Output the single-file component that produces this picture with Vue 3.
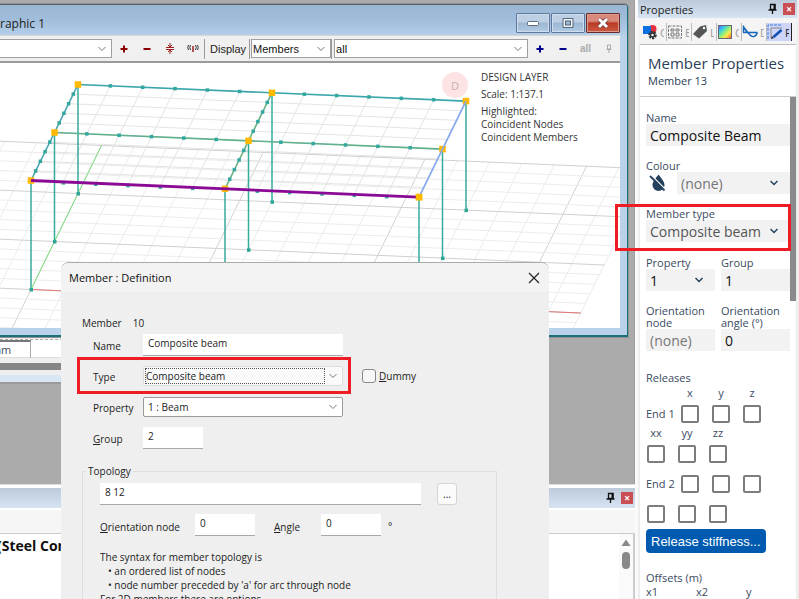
<script setup>
import { ref } from 'vue'

const W = [194, 8.3]
const D = [23.5, -48]
const corner = [31, 180.5]
const height = 109

const at = (u, v) => [
  corner[0] + u * W[0] + v * D[0],
  corner[1] + u * W[1] + v * D[1],
]
const seg = (a, b, dy = 0) => ({ x1: a[0], y1: a[1] + dy, x2: b[0], y2: b[1] + dy })

/* roof panel mesh: 6 divisions across, 5 divisions deep, per bay */
const mesh = []
for (let i = 0; i <= 12; i++) mesh.push(seg(at(i / 6, 0), at(i / 6, 2)))
for (let j = 0; j <= 10; j++) mesh.push(seg(at(0, j / 5), at(2, j / 5)))

/* ground grid, heavier every fifth line */
const ground = []
for (let i = -10; i <= 17; i++) {
  ground.push({ ...seg(at(i / 6, -1), at(i / 6, 3), height), major: i % 5 === 0 })
}
for (let j = -5; j <= 15; j++) {
  ground.push({ ...seg(at(-10 / 6, j / 5), at(17 / 6, j / 5), height), major: j % 5 === 0 })
}

const columns = []
const nodes = []
for (let u = 0; u <= 2; u++) {
  for (let v = 0; v <= 2; v++) {
    const p = at(u, v)
    nodes.push(p)
    columns.push({ x: p[0], y1: p[1], y2: p[1] + height })
  }
}

const dots = []
for (let v = 0; v <= 2; v++) {
  for (let i = 1; i < 12; i++) if (i !== 6) dots.push([...at(i / 6, v), v === 0 ? 1 : 0])
}
for (let u = 0; u <= 1; u++) {
  for (let j = 1; j < 10; j++) if (j !== 5) dots.push([...at(u, j / 5), 0])
}

const redAxis = seg(at(0, 0), at(17 / 6, 0), height)
const greenAxis = seg(at(0, 0), at(0, 3), height)
const backBeam = seg(at(0, 2), at(2, 2))
const midBeam = seg(at(0, 1), at(2, 1))
const leftBeam = seg(at(0, 0), at(0, 2))
const centreBeam = seg(at(1, 0), at(1, 2))
const rightBeam = seg(at(2, 0), at(2, 2))
const frontBeam = seg(at(0, 0), at(2, 0))

const form = ref({ name: 'Composite beam', group: '2', topology: '8 12', node: '0', angle: '0' })
const props = ref({ name: 'Composite Beam', group: '1', node: '(none)', angle: '0' })
</script>

<template>
  <div class="app">
    <div class="work">
      <div class="desktop">
        <section class="table-window">
          <div class="sheet"><span class="cell">am</span></div>
          <div class="hbar"></div>
          <div class="edge"></div>
        </section>

        <section class="graphic">
          <header class="graphic-title">
            <span>raphic 1</span>
            <div class="win-buttons">
              <button class="wb" aria-label="Minimise">
                <svg width="14" height="14" viewBox="0 0 14 14"><rect x="1.500" y="5.500" width="11" height="4" rx="1" fill="#fff" stroke="#5d6c7d" /></svg>
              </button>
              <button class="wb" aria-label="Maximise">
                <svg width="14" height="14" viewBox="0 0 14 14"><path d="M2 2.500h10v9H2z" fill="#eef3f8" stroke="#55667a" /><rect x="4.500" y="5" width="5" height="4" fill="#9db6d0" stroke="#55667a" /></svg>
              </button>
              <button class="wb red" aria-label="Close">
                <svg width="14" height="14" viewBox="0 0 14 14"><path d="M3 3l8 8M11 3l-8 8" stroke="#6d3030" stroke-width="4.500" /><path d="M3 3l8 8M11 3l-8 8" stroke="#fff" stroke-width="3" /></svg>
              </button>
            </div>
          </header>

          <div class="toolbar">
            <div class="pick first">
              <select aria-label="List"><option></option></select>
              <svg class="chev" width="8" height="6" viewBox="0 0 8 6"><path d="M.5 1L4 4.500 7.500 1" /></svg>
            </div>
            <button class="tool" aria-label="Add"><svg width="14" height="14" viewBox="0 0 14 14"><path d="M7 3.500v7M3.500 7h7" stroke="#8b0000" stroke-width="2" /></svg></button>
            <button class="tool" aria-label="Remove"><svg width="14" height="14" viewBox="0 0 14 14"><path d="M3.500 7h7" stroke="#8b0000" stroke-width="2" /></svg></button>
            <button class="tool" aria-label="Shrink"><svg width="14" height="14" viewBox="0 0 14 14" fill="none" stroke="#a02020"><path d="M3 5.500h8M3 7.500h8M7 1v4M7 8v4M5 3l2 2 2-2M5 10l2-2 2 2" /></svg></button>
            <button class="tool" aria-label="Broadcast"><svg width="14" height="14" viewBox="0 0 14 14" fill="none" stroke="#333"><path d="M2.500 3q-1.500 2.500 0 5M4.500 3q-1.500 2.500 0 5M11.500 3q1.500 2.500 0 5M9.500 3q1.500 2.500 0 5" /><path d="M7 4v6" stroke="#a02020" stroke-width="1.500" /></svg></button>
            <i class="sep"></i>
            <label class="display" for="kind">Display</label>
            <i class="sep"></i>
            <div class="pick kind">
              <select id="kind"><option>Members</option></select>
              <svg class="chev" width="8" height="6" viewBox="0 0 8 6"><path d="M.5 1L4 4.500 7.500 1" /></svg>
            </div>
            <i class="sep"></i>
            <div class="pick grow">
              <select aria-label="Which"><option>all</option></select>
              <svg class="chev" width="8" height="6" viewBox="0 0 8 6"><path d="M.5 1L4 4.500 7.500 1" /></svg>
            </div>
            <button class="tool" aria-label="Add to list"><svg width="14" height="14" viewBox="0 0 14 14"><path d="M7 3.500v7M3.500 7h7" stroke="#00008b" stroke-width="2" /></svg></button>
            <button class="tool" aria-label="Remove from list"><svg width="14" height="14" viewBox="0 0 14 14"><path d="M3.500 7h7" stroke="#00008b" stroke-width="2" /></svg></button>
            <button class="tool all">all</button>
            <button class="tool" aria-label="Pin"><svg width="14" height="14" viewBox="0 0 14 14" fill="none" stroke="#aaa"><path d="M5.500 3h3v4h-3zM4.500 7.500h5M7 8v3" /></svg></button>
          </div>

          <div class="viewport">
            <svg class="scene" viewBox="0 63 620 265" preserveAspectRatio="xMinYMin meet">
              <g stroke-width="1">
                <line v-for="(l, i) in ground" :key="'g' + i" :x1="l.x1" :y1="l.y1" :x2="l.x2" :y2="l.y2" :stroke="l.major ? '#d0d0d0' : '#ececec'" />
                <line v-for="(l, i) in mesh" :key="'m' + i" v-bind="l" stroke="#e4e4e4" />
              </g>
              <line v-bind="redAxis" stroke="#e07878" />
              <line v-bind="greenAxis" stroke="#7be07b" />
              <line v-for="(c, i) in columns" :key="'c' + i" :x1="c.x" :x2="c.x" :y1="c.y1" :y2="c.y2" stroke="#35ab9c" stroke-width="1.500" />
              <rect v-for="(c, i) in columns" :key="'b' + i" :x="c.x - 1.5" :y="c.y2 - 1.5" width="3.500" height="3.500" fill="#2fa596" />
              <g stroke-width="1.600">
                <line v-bind="backBeam" stroke="#3ba7ad" />
                <line v-bind="midBeam" stroke="#5fb08c" />
                <line v-bind="leftBeam" stroke="#45a5b0" />
                <line v-bind="centreBeam" stroke="#6bb182" />
              </g>
              <rect v-for="(d, i) in dots" :key="'d' + i" :x="d[0] - 1.75" :y="d[1] - 1.75 + d[2]" width="3.500" height="3.500" fill="#33a8a0" />
              <rect v-for="(n, i) in nodes" :key="'n' + i" :x="n[0] - 3.25" :y="n[1] - 3.25" width="6.500" height="6.500" fill="#ffb900" />
              <line v-bind="rightBeam" stroke="#86a8ec" stroke-width="1.700" />
              <line v-bind="frontBeam" stroke="#8a0a96" stroke-width="2.800" />
              <rect :x="nodes[6][0] - 3.25" :y="nodes[6][1] - 3.25" width="6.500" height="6.500" fill="#ffb900" />
            </svg>
            <div class="legend">
              <span class="badge">D</span>
              <div class="legend-text">
                <p>DESIGN LAYER</p>
                <p>Scale: 1:137.1</p>
                <ul><li>Highlighted:</li><li>Coincident Nodes</li><li>Coincident Members</li></ul>
              </div>
            </div>
          </div>
        </section>
      </div>

      <section class="output">
        <header class="bar">
          <svg width="11" height="12" viewBox="0 0 11 12"><path d="M3.500 1.500h4.500v5H3.500zM1.500 7h8M5.500 7v4" fill="none" stroke="#111" stroke-width="1.300" /><path d="M6.500 1h2v6h-2z" fill="#111" /></svg>
          <button class="x" aria-label="Close output">×</button>
        </header>
        <div class="output-tools"></div>
        <div class="output-body">
          <strong>(Steel Com</strong>
          <div class="vscroll">
            <svg width="10" height="8" viewBox="0 0 10 8"><path d="M5 .5L9.500 7h-9z" fill="#888" /></svg>
            <i></i>
          </div>
        </div>
      </section>

      <form class="dialog" role="dialog" aria-label="Member : Definition" @submit.prevent>
        <header>
          <h2>Member : Definition</h2>
          <button type="button" class="close" aria-label="Close"><svg width="12" height="12" viewBox="0 0 12 12"><path d="M1 1l10 10M11 1L1 11" stroke="#222" stroke-width="1.200" /></svg></button>
        </header>
        <div class="dialog-body">
          <p class="member"><span>Member</span><span>10</span></p>
          <div class="row">
            <label for="d-name">Name</label>
            <input id="d-name" v-model="form.name" class="box wide" />
          </div>
          <div class="row">
            <label for="d-type">Type</label>
            <div class="combo flat wide">
              <select id="d-type"><option>Composite beam</option></select>
              <svg class="chev" width="8" height="6" viewBox="0 0 8 6"><path d="M.5 1L4 4.500 7.500 1" /></svg>
            </div>
            <label class="dummy"><input type="checkbox" /><span><u>D</u>ummy</span></label>
            <div class="mark"></div>
          </div>
          <div class="row">
            <label for="d-prop">Property</label>
            <div class="combo wide">
              <select id="d-prop"><option>1 : Beam</option></select>
              <svg class="chev" width="8" height="6" viewBox="0 0 8 6"><path d="M.5 1L4 4.500 7.500 1" /></svg>
            </div>
          </div>
          <div class="row">
            <label for="d-group"><u>G</u>roup</label>
            <input id="d-group" v-model="form.group" class="box short" />
          </div>
          <fieldset>
            <legend>Topology</legend>
            <div class="line">
              <input v-model="form.topology" class="box topo" aria-label="Topology" />
              <button type="button" class="more">...</button>
            </div>
            <div class="line second">
              <label class="l-node" for="d-node"><u>O</u>rientation node</label>
              <input id="d-node" v-model="form.node" class="box short" />
              <label class="l-angle" for="d-angle"><u>A</u>ngle</label>
              <input id="d-angle" v-model="form.angle" class="box short" />
              <span class="deg">°</span>
            </div>
            <div class="hint">
              <p>The syntax for member topology is</p>
              <ul><li>• an ordered list of nodes</li><li>• node number preceded by 'a' for arc through node</li></ul>
              <p>For 2D members there are options</p>
            </div>
          </fieldset>
        </div>
      </form>
    </div>

    <aside class="panel">
      <header class="bar">
        <h2>Properties</h2>
        <svg width="11" height="12" viewBox="0 0 11 12"><path d="M3.500 1.500h4.500v5H3.500zM1.500 7h8M5.500 7v4" fill="none" stroke="#111" stroke-width="1.300" /><path d="M6.500 1h2v6h-2z" fill="#111" /></svg>
        <button class="x" aria-label="Close properties">×</button>
      </header>
      <nav class="tabs">
        <button><svg width="16" height="16" viewBox="0 0 16 16"><circle cx="10.500" cy="5" r="4" fill="#e8313a" /><rect x="1" y="2" width="8" height="8" fill="#0a6fe0" /><circle cx="10.500" cy="11" r="3" fill="none" stroke="#333" stroke-width="2.500" stroke-dasharray="2 1" /><circle cx="10.500" cy="11" r="2" fill="none" stroke="#333" stroke-width="1.500" /></svg><span>C</span></button>
        <button><svg width="16" height="16" viewBox="0 0 16 16" fill="none" stroke="#777"><rect x="1.500" y="2" width="13" height="12" stroke-dasharray="3 1" /><path d="M4 5h3v2H4zM9 5h3v2H9zM4 9h3v3H4zM9 9h3v3H9z" /></svg><span>E</span></button>
        <button><svg width="16" height="16" viewBox="0 0 16 16"><path d="M1 10L8 2.500l6-1.500 1 6-8 7.500z" fill="#555" /><circle cx="12" cy="4" r="1.200" fill="#fff" /></svg><span>L</span></button>
        <button><svg width="16" height="16" viewBox="0 0 16 16"><defs><linearGradient id="rainbow" x1="0" y1="0" x2="1" y2="1"><stop offset="0" stop-color="#6a4df0" /><stop offset=".25" stop-color="#30c8f0" /><stop offset=".5" stop-color="#8ff07a" /><stop offset=".7" stop-color="#ffe94a" /><stop offset="1" stop-color="#ff4a2a" /></linearGradient></defs><rect x="1.500" y="1.500" width="13" height="13" fill="url(#rainbow)" stroke="#667" /></svg><span>C</span></button>
        <button><svg width="16" height="16" viewBox="0 0 16 16" fill="none" stroke="#1768b8" stroke-width="1.500"><path d="M1.500 1.500v7M1 8.500h14.500M1.500 3l6 7.500q3.500 4 6.500.5l1.500-2.500" /><path d="M4 8v-2M14.500 8.500v3" stroke-width="1" /></svg><span>D</span></button>
        <button class="on"><svg width="16" height="16" viewBox="0 0 16 16" fill="none"><path d="M1 15V1h14" stroke="#3b7be0" stroke-dasharray="3 1" /><path d="M4 14V4h11" stroke="#888" /><path d="M6.500 13l8-7" stroke="#1250b8" stroke-width="2.600" /><path d="M4 15l1-3 2 2z" fill="#222" /></svg><span>P</span></button>
      </nav>
      <div class="card">
        <div class="heading">
          <h1>Member Properties</h1>
          <p>Member 13</p>
        </div>
        <div class="thumb"></div>
        <div class="fields">
          <div class="field">
            <label for="p-name">Name</label>
            <input id="p-name" v-model="props.name" />
          </div>
          <div class="field">
            <label for="p-colour">Colour</label>
            <div class="colour">
              <svg width="18" height="18" viewBox="0 0 18 18"><path d="M9.500 .5C6.500 4.500 3.500 7.500 3.500 11a6 6 0 0 0 12 0C15.500 7.500 12.500 4.500 9.500 .5z" fill="#24405c" /><path d="M2.500 1.500l15 15" stroke="#f8f8f8" stroke-width="1.500" /><path d="M1 2l14.500 14.500" stroke="#24405c" stroke-width="1.800" /></svg>
              <div class="sel">
                <select id="p-colour" class="muted"><option>(none)</option></select>
                <svg class="chev" width="8" height="6" viewBox="0 0 8 6"><path d="M.5 1L4 4.500 7.500 1" /></svg>
              </div>
            </div>
          </div>
          <div class="field">
            <label for="p-type">Member type</label>
            <div class="sel">
              <select id="p-type" class="soft"><option>Composite beam</option></select>
              <svg class="chev" width="8" height="6" viewBox="0 0 8 6"><path d="M.5 1L4 4.500 7.500 1" /></svg>
            </div>
            <div class="mark"></div>
          </div>
          <div class="pair">
            <div class="field">
              <label for="p-prop">Property</label>
              <div class="sel">
                <select id="p-prop"><option>1</option></select>
                <svg class="chev" width="8" height="6" viewBox="0 0 8 6"><path d="M.5 1L4 4.500 7.500 1" /></svg>
              </div>
            </div>
            <div class="field">
              <label for="p-group">Group</label>
              <input id="p-group" v-model="props.group" />
            </div>
          </div>
          <div class="pair">
            <div class="field">
              <label for="p-node">Orientation node</label>
              <input id="p-node" v-model="props.node" class="muted" />
            </div>
            <div class="field">
              <label for="p-angle">Orientation angle (°)</label>
              <input id="p-angle" v-model="props.angle" />
            </div>
          </div>
        </div>
        <div class="releases">
          <h3>Releases</h3>
          <div class="rel heads"><span></span><b>x</b><b>y</b><b>z</b></div>
          <div class="rel"><span>End 1</span><input v-for="a in ['x', 'y', 'z']" :key="a" type="checkbox" :aria-label="'End 1 ' + a" /></div>
          <div class="rel rot heads"><b>xx</b><b>yy</b><b>zz</b></div>
          <div class="rel rot"><input v-for="a in ['xx', 'yy', 'zz']" :key="a" type="checkbox" :aria-label="'End 1 ' + a" /></div>
          <div class="rel end2"><span>End 2</span><input v-for="a in ['x', 'y', 'z']" :key="a" type="checkbox" :aria-label="'End 2 ' + a" /></div>
          <div class="rel rot end2"><input v-for="a in ['xx', 'yy', 'zz']" :key="a" type="checkbox" :aria-label="'End 2 ' + a" /></div>
          <button class="primary">Release stiffness...</button>
          <h3 class="offsets">Offsets (m)</h3>
          <div class="offs"><label>x1<input /></label><label>x2<input /></label><label>y<input /></label></div>
        </div>
      </div>
    </aside>
  </div>
</template>

<style>
body { overflow: hidden; }
</style>

<style scoped>
* { box-sizing: border-box; }
h1, h2, h3, p, ul { margin: 0; padding: 0; font-weight: 400; list-style: none; }
button, input, select { font: inherit; color: inherit; border: 0; padding: 0; margin: 0; border-radius: 0; background: none; outline: 0; min-width: 0; }
select { appearance: none; width: 100%; height: 100%; }
svg { display: block; flex: none; }
u { text-decoration-thickness: 1px; text-underline-offset: 1px; }
.chev path { fill: none; stroke: #777; }

.app { display: grid; grid-template: 100% / 1fr 164px; height: 100vh; overflow: hidden; font-family: "Open Sans", "Noto Sans", sans-serif; font-size: 11px; color: #222; background: #fff; }
.work { position: relative; display: flex; flex-direction: column; min-width: 0; }
.desktop { position: relative; flex: 1; background: #ababab; border-right: 1px solid #9c9c9c; overflow: hidden; }

.graphic { position: absolute; left: 0; top: 4px; right: 6px; border: solid #1a7276; border-width: 1px 1px 2px 0; border-top-color: #555f6a; border-top-right-radius: 4px; background: #bad1ea; overflow: hidden; box-shadow: 0 0 0 1px #8d9296; }
.graphic-title { display: flex; align-items: center; justify-content: space-between; height: 30px; padding: 6px 7px 0 0; font-size: 12px; background: linear-gradient(#9ab6d3, #a0bddb 50%, #b3cfea); }
.win-buttons { display: flex; gap: 1px; }
.wb { display: grid; place-items: center; width: 34px; height: 20px; border: 1px solid #60789a; border-radius: 1px; background: linear-gradient(#bccfe3 45%, #9db7d2 50%, #b2cbe5); box-shadow: inset 0 0 0 1px #cfdeee; }
.wb.red { background: linear-gradient(#d9897b 40%, #b83b25 50%, #cc5a40); border-color: #6b2a2a; box-shadow: inset 0 0 0 1px #dd9a8c; }

.toolbar { display: flex; align-items: center; height: 28px; margin-right: 7px; background: #f0f0f0; border-bottom: 2px solid #9a9a9a; border-top: 1px solid #d8d8d8; font-family: "Liberation Sans", Arial, sans-serif; }
.pick { display: grid; align-items: center; height: 19px; border: 1px solid #a0a0a0; background: #fff; font-size: 11px; color: #111; }
.pick > *, .combo > *, .sel > * { grid-area: 1 / 1; }
.pick .chev, .combo .chev, .sel .chev { justify-self: end; margin-right: 5px; pointer-events: none; }
.pick select { padding-left: 1px; }
.first { width: 112px; border-left: 0; }
.kind { width: 80px; }
.grow { flex: 1; margin-left: 1px; }
.tool { display: grid; place-items: center; width: 23px; height: 18px; }
.tool.all { font-weight: 700; font-size: 10px; color: #aaa; }
.sep { width: 1px; height: 20px; background: #999; margin-right: 1px; }
.display { padding: 0 3px 0 4px; font-size: 11px; }

.viewport { position: relative; height: 265px; margin: 0 7px 7px 0; background: #fff; overflow: hidden; }
.scene { width: 100%; height: 100%; }
.legend { position: absolute; left: 442px; top: 8px; display: flex; gap: 13px; }
.badge { display: grid; place-items: center; width: 26px; height: 26px; margin-top: 1px; border-radius: 50%; background: #fde3e3; color: #c9b0b0; }
.legend-text { font-size: 10px; line-height: 13px; color: #333; white-space: nowrap; }
.legend-text p { margin-bottom: 4px; }

.table-window { position: absolute; left: 0; right: 200px; top: 336px; height: 48px; padding-top: 3px; background: #eee; border-bottom: 2px solid #9a9a9a; }
.sheet { height: 19px; background: #fff; border-top: 1px dashed #aaa; border-bottom: 1px solid #ddd; }
.cell { display: block; width: 31px; height: 18px; border-top: 2px solid #777; border-right: 1px solid #aaa; line-height: 16px; color: #3b4a5a; font-size: 11px; text-indent: -5px; }
.hbar { height: 7px; margin: 5px 0; background: #858585; }
.edge { height: 7px; background: #d8e5f2; }

.bar { display: flex; align-items: center; background: linear-gradient(#bccad9, #d5e3f2); }
.x { display: grid; place-items: center; width: 12px; height: 12px; margin-left: 5px; background: #c94f55; color: #fff; font-size: 10px; font-weight: 700; line-height: 10px; }
.output { height: 115px; display: flex; flex-direction: column; background: #fff; border-top: 1px solid #ddd; }
.output .bar { height: 20px; margin-top: 3px; justify-content: flex-end; padding-right: 2px; }
.output-tools { height: 24px; margin-top: 2px; background: #f6f6f6; border-bottom: 1px solid #ccc; }
.output-body { flex: 1; display: flex; justify-content: space-between; border-right: 2px solid #ccc; }
.output-body strong { font-size: 14px; line-height: 24px; color: #111; margin-left: -3px; }
.vscroll { width: 14px; padding: 5px 3px; background: #fafafa; }
.vscroll svg { margin-left: -1px; }
.vscroll i { display: block; width: 8px; height: 17px; margin-top: 5px; border-radius: 4px; background: #888; }

.dialog { position: absolute; left: 61px; top: 262px; bottom: -8px; right: 86px; background: #efefef; border-top: 1px solid #aaa; border-radius: 8px 8px 0 0; overflow: hidden; font-size: 10px; }
.dialog header { display: flex; align-items: center; justify-content: space-between; height: 29px; padding: 0 9px 0 8px; background: #f3f3f3; }
.dialog h2 { font-size: 11px; color: #111; }
.dialog-body { padding: 24px 52px 0 21px; line-height: 14px; }
.member { display: flex; gap: 11px; margin-bottom: 4px; }
.row { position: relative; display: flex; height: 22px; margin-bottom: 9px; padding-left: 11px; }
.row > label:first-child { width: 50px; padding-top: 5px; flex: none; }
.box { height: 22px; padding: 0 5px 3px; background: #fff; border-bottom: 1px solid #a8a8a8; }
.wide { width: 200px; }
.short { width: 60px; }
.combo { display: grid; align-items: center; height: 20px; margin-top: 1px; background: #fff; border: 1px solid #9a9a9a; border-radius: 2px; }
.combo select { padding-left: 4px; }
.combo.flat { background: #fafafa; border-color: #ddd; }
.combo.flat select { width: 180px; height: 16px; margin-left: 1px; padding-left: 0; border: 1px dotted #555; }
.dummy { display: flex; align-items: center; gap: 3px; height: 22px; margin-left: 19px; }
.dummy input, .rel input { appearance: none; width: 14px; height: 14px; border: 1px solid #888; border-radius: 3px; background: #f7f7f7; }
.mark { position: absolute; z-index: 5; border: 3px solid #ee1c24; pointer-events: none; }
.row .mark { left: -5px; top: -8px; width: 274px; height: 37px; }
fieldset { height: 180px; margin: 15px 0 0; padding: 5px 0 0 17px; border: 1px solid #dedede; min-width: 0; }
legend { margin-left: -14px; padding: 0 2px; line-height: 14px; }
.line { display: flex; }
.topo { flex: 0 1 321px; }
.more { width: 20px; height: 22px; margin-left: 16px; background: #fbfbfb; border: 1px solid #d4d4d4; border-radius: 3px; }
.second { margin-top: 9px; }
.second label { padding-top: 6px; white-space: nowrap; }
.l-node { width: 95px; }
.l-angle { width: 66px; padding-left: 19px; }
.deg { padding: 5px 7px; }
.hint { margin-top: 12px; line-height: 14px; }
.hint li { padding-left: 8px; }

.panel { position: relative; display: flex; flex-direction: column; min-height: 0; padding: 0 2px 0 3px; background: linear-gradient(90deg, #fafafa 3px, #ededed 3px); color: #3a4a5f; }
.panel .bar { height: 18px; flex: none; padding: 0 2px; }
.panel .bar h2 { flex: 1; font-size: 11px; color: #222; }
.tabs { display: flex; flex: none; height: 26px; padding: 5px 0 2px 4px; background: #f4f4f4; }
.tabs button { display: flex; align-items: center; gap: 2px; width: 25px; height: 18px; overflow: hidden; border-right: 1px solid #bbb; font-size: 11px; color: #999; }
.tabs button.on { background: #cfd5f8; border-right-color: #222; color: #222; }
.tabs button span { width: 4px; overflow: hidden; }
.card { position: relative; flex: 1; min-height: 0; margin: 0 1px 0 2px; background: #fff; border-top: 1px solid #bbb; }
.heading { height: 52px; padding: 8px 0 0 8px; border-bottom: 1px solid #ccc; white-space: nowrap; color: #2b4058; }
.heading h1 { font-size: 15px; line-height: 20px; }
.heading p { font-size: 11px; line-height: 15px; }
.thumb { position: absolute; right: 0; top: 52px; width: 6px; height: 204px; background: #8a8a8a; }
.fields { display: flex; flex-direction: column; gap: 14px; padding: 15px 6px 0; }
.field { position: relative; display: flex; flex-direction: column; min-width: 0; }
.field label { position: relative; z-index: 1; line-height: 12px; }
.field input, .sel { width: 100%; height: 22px; background: #f2f2f2; font-size: 14px; color: #111; }
.field input { padding: 0 4px; }
.sel { display: grid; align-items: center; }
.sel select { padding-left: 4px; }
.sel .chev { margin-right: 12px; }
.sel .chev path { stroke: #24405c; stroke-width: 1.500; }
.sel .muted, .field input.muted { color: #767676; }
.sel .soft { color: #555; }
.colour { display: grid; grid-template-columns: 31px 1fr; align-items: center; }
.colour > svg { margin-left: 3px; }
.pair { display: grid; grid-template-columns: 1fr 1fr; gap: 6px; margin-top: 1px; }
.pair + .pair { margin-top: 0; }
.field .mark { left: -31px; right: -1px; top: -4px; height: 47px; }
.releases { padding: 20px 6px 0; line-height: 12px; }
.releases h3 { font-size: 11px; line-height: 14px; }
.rel { display: grid; grid-template-columns: 22px 18px 18px 18px; column-gap: 13px; align-items: center; height: 18px; white-space: nowrap; }
.rel.rot { grid-template-columns: 18px 18px 18px; padding-left: 1px; }
.rel.heads { height: 20px; padding-bottom: 4px; }
.rel.rot.heads { height: 22px; padding-bottom: 2px; }
.rel b { font-weight: 400; text-align: center; }
.rel input { width: 18px; height: 18px; border: 2px solid #7c7c7c; border-radius: 2px; background: #fff; }
.rel.end2 { margin-top: 12px; }
.primary { height: 24px; margin-top: 6px; padding: 0 5px; border-radius: 4px; background: #005bb0; color: #fff; font: 13px "Liberation Sans", Arial, sans-serif; white-space: nowrap; }
.offsets { margin-top: 18px; }
.offs { display: grid; grid-template-columns: 1fr 1fr 1fr; gap: 6px; line-height: 14px; }
.offs input { display: block; width: 100%; height: 22px; background: #f2f2f2; }
</style>
